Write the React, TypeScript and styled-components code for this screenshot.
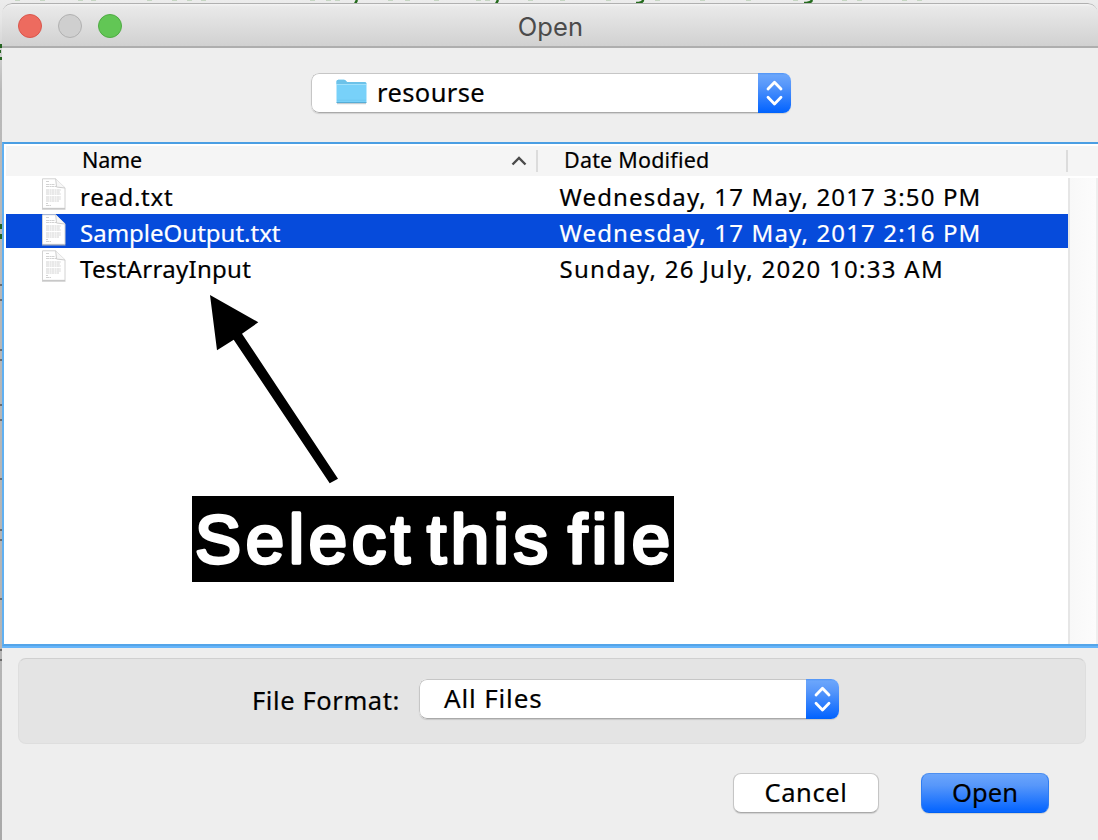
import React from 'react';
import styled, { createGlobalStyle, css } from 'styled-components';

const GlobalStyle = createGlobalStyle`
  *, *::before, *::after { box-sizing: border-box; }
  body { margin: 0; overflow: hidden; }
`;

const uiFont = "'Noto Sans', 'Open Sans', sans-serif";

const Desktop = styled.div`
  position: relative;
  width: 1098px;
  height: 840px;
  padding: 3px 0 0 2px;
  overflow: hidden;
  background: linear-gradient(#ececec 0, #e6e6e6 20px, #b9b9b9 90px, #b4b4b4 700px, #a8a8a8);
  font-family: ${uiFont};
  color: #000;
`;

const EditorSliver = styled.svg`
  position: absolute;
  left: 0;
  top: 0;
`;

const Window = styled.main`
  position: relative;
  display: flex;
  flex-direction: column;
  width: 1096px;
  height: 837px;
  border-radius: 10px 10px 0 0;
  background: #eee;
  overflow: hidden;
`;

const TitleBar = styled.header`
  display: grid;
  grid-template-columns: 1fr auto 1fr;
  align-items: center;
  height: 45px;
  padding: 1px 15px 0 16px;
  border-top: 1px solid #b0b0b0;
  border-bottom: 2px solid #aeaeae;
  border-radius: 10px 10px 0 0;
  background: linear-gradient(#f4f4f4 0, #e9e9e9 3px, #d1d1d1 100%);
`;

const TrafficLights = styled.div`
  display: flex;
  gap: 16px;
`;

const Light = styled.span<{ $fill: string; $ring: string }>`
  width: 24px;
  height: 24px;
  border: 1px solid ${p => p.$ring};
  border-radius: 50%;
  background: ${p => p.$fill};
`;

const Title = styled.h1`
  margin: 0;
  padding-top: 3px;
  font: 400 25.5px/30px Inter, sans-serif;
  letter-spacing: 0.1px;
  color: #4b4b4b;
`;

const Toolbar = styled.div`
  display: flex;
  justify-content: center;
  height: 94px;
  padding: 25px 0 0 2px;
`;

const Select = styled.div<{ $width: number }>`
  display: flex;
  width: ${p => p.$width}px;
  height: 40px;
  border-radius: 8px;
  background: #fff;
  overflow: hidden;
  box-shadow: 0 1px 1px rgba(0, 0, 0, 0.13);
`;

const SelectValue = styled.div<{ $indent: number }>`
  display: flex;
  flex: 1;
  align-items: center;
  padding-left: ${p => p.$indent}px;
  padding-bottom: 2px;
  border: 1px solid #c6c6c6;
  border-right: 0;
  border-bottom-color: #a9a9a9;
  border-radius: 8px 0 0 8px;
`;

const SelectToggle = styled.div`
  display: flex;
  align-items: center;
  justify-content: center;
  width: 33px;
  background: linear-gradient(#4f93f6 0, #6ba6fb 2px, #5797fa 30%, #0a68ff 92%, #0063fb);
`;

const Label = styled.span<{ $size: number; $spacing: number }>`
  font-size: ${p => p.$size}px;
  line-height: 34px;
  letter-spacing: ${p => p.$spacing}px;
  white-space: nowrap;
  -webkit-text-stroke: 0.2px currentColor;
`;

const FileList = styled.section`
  position: relative;
  height: 504px;
  padding: 2px 0 0 2px;
  border-top: 2px solid #4a9ee3;
  border-left: 2px solid #60b0f2;
  border-bottom: 2px solid #54a5e9;
  background: #fff;
  box-shadow: 0 2px #66b5fa;
`;

const columns = css`
  display: grid;
  grid-template-columns: 532px 530px 30px;
`;

const ListHeader = styled.div`
  ${columns}
  height: 30px;
  padding: 4px 0;
  background: #f5f5f5;
`;

const HeaderCell = styled.div<{ $indent: number }>`
  display: flex;
  align-items: center;
  justify-content: space-between;
  height: 22px;
  padding-left: ${p => p.$indent}px;
  padding-right: 9px;
  padding-bottom: 3px;
  border-right: 2px solid #dcdcdc;
`;

const ListBody = styled.div`
  display: grid;
  grid-template-columns: 1062px 30px;
  height: 468px;
  padding-top: 2px;
`;

const Rows = styled.div`
  display: flex;
  flex-direction: column;
  gap: 2px;
`;

const Row = styled.div<{ $selected?: boolean }>`
  display: grid;
  grid-template-columns: 35px 39px 479.5px 1fr;
  height: 34px;
  color: ${p => (p.$selected ? '#fff' : '#000')};
  background: ${p => (p.$selected ? '#064bdb' : '#fff')};
`;

const NameLabel = styled(Label)`
  grid-column: 3;
  padding-top: 2px;
`;

const DateLabel = styled(Label)`
  padding-top: 2px;
`;

const FileIcon = styled.svg`
  grid-column: 2;
`;

const FolderIcon = styled.svg`
  margin-right: 10px;
`;

const SortArrow = styled.svg`
  margin-top: 2px;
`;

const ScrollTrack = styled.div`
  border-left: 2px solid #e6e6e6;
  border-right: 2px solid #efefef;
  background: linear-gradient(90deg, #f8f8f8, #fcfcfc);
`;

const FormatPanel = styled.section`
  display: flex;
  align-items: center;
  width: 1068px;
  height: 86px;
  margin: 12px 0 0 16px;
  padding: 0 0 4px 233px;
  border: 1px solid #dedede;
  border-top-color: #d0d0d0;
  border-radius: 8px;
  background: #e4e4e4;
`;

const FormatCaption = styled(Label)`
  width: 167px;
  padding-top: 2px;
`;

const Actions = styled.footer`
  display: flex;
  justify-content: flex-end;
  gap: 42px;
  padding: 29px 49px 0 0;
`;

const Button = styled.button<{ $primary?: boolean }>`
  display: flex;
  align-items: center;
  justify-content: center;
  width: ${p => (p.$primary ? 128 : 146)}px;
  height: 40px;
  padding: 0 0 2px;
  border: 1px solid;
  border-color: ${p => (p.$primary ? '#4d8ff0 #2f7df2 #0060f3' : '#cbcbcb #c5c5c5 #a9a9a9')};
  border-radius: 8px;
  font-family: ${uiFont};
  color: #000;
  background: ${p => (p.$primary ? 'linear-gradient(#6ba5fb, #5797fa 30%, #0a68ff 94%)' : '#fff')};
  box-shadow: 0 1px 1px rgba(0, 0, 0, 0.13);
`;

const Annotation = styled.svg`
  position: absolute;
  left: 188px;
  top: 150px;
`;

function Chevrons() {
  return (
    <svg width="17" height="26" viewBox="0 0 17 26" fill="none" stroke="#fff" strokeWidth="2.8" strokeLinecap="round" strokeLinejoin="round">
      <path d="M2 9 8.5 2.3 15 9M2 17.3 8.5 24 15 17.3" />
    </svg>
  );
}

function Folder() {
  return (
    <FolderIcon width="31" height="26" viewBox="0 0 31 26">
      <path d="M1 24.7h29" stroke="#b9c3c8" strokeWidth="1" />
      <path d="M.5 2.5Q.5.7 2.3.7H8q1 0 1.6.8L11 3h17.5q2 0 2 2v17.6q0 1.4-1.5 1.4H2Q.5 24 .5 22.5Z" fill="#78d1f9" />
      <path d="M.5 5V2.5Q.5.7 2.3.7H8q1 0 1.6.8L11 3h17.5q2 0 2 2Z" fill="#6cc2e9" />
      <path d="M1 5.5h29" stroke="#a0e0fb" />
      <path d="M1 21.2h29" stroke="#69c3ed" strokeWidth=".7" />
      <path d="M.5 23.5h30" stroke="#55acd6" />
    </FolderIcon>
  );
}

function Document() {
  return (
    <FileIcon width="26" height="34" viewBox="0 0 26 34">
      <path d="M1.5.8h13.2l9.3 9V30.3H1.5Z" fill="#fff" stroke="#d2d2d2" />
      <path d="M1 31h23.5" stroke="#b4b4b4" />
      <path d="M14.7.8 15.5 9 24 10" fill="#f7f7f7" stroke="#cdcdcd" />
      <path d="M5 3.5h3M5 6.5h9M5 8.5h10M5 12h15M5 14h14M5 16h15M5 19h15M5 21h15M5 23h13M5 25.5h2M5 27.5h5" stroke="#c6c6c6" strokeWidth=".8" strokeDasharray="3 .5 1.5 .4" />
    </FileIcon>
  );
}

const files = [
  { name: 'read.txt', spacing: 0.7, date: 'Wednesday, 17 May, 2017 3:50 PM', dateSpacing: 1.15 },
  { name: 'SampleOutput.txt', spacing: 0, date: 'Wednesday, 17 May, 2017 2:16 PM', dateSpacing: 1.15, selected: true },
  { name: 'TestArrayInput', spacing: 0.3, date: 'Sunday, 26 July, 2020 10:33 AM', dateSpacing: 1.28 },
];

const words = [
  { text: 'Select', x: 3, length: 215 },
  { text: 'this', x: 235, length: 121 },
  { text: 'file', x: 376, length: 102 },
];

const topMarks = [15, 40, 78, 91, 147, 172, 187, 201, 310, 326, 335, 388, 405, 434, 476, 485, 528, 560, 606, 655, 700, 746, 793, 842, 857, 902, 917];

export default function App() {
  return (
    <>
      <GlobalStyle />
      <Desktop>
        <EditorSliver width="1098" height="840">
          <path d={topMarks.map(x => `M${x} 0h5`).join('')} stroke="#b9ceb5" strokeWidth="1.5" />
          <path d="M357 0l-2 4M498 0l-2 4M643 0q0 3-7 3M812 0q-1 3-8 3" fill="none" stroke="#246b1d" strokeWidth="2.5" />
          <path d="M0 44h2v4H0zM0 50h1v3H0zM0 57h2v3H0zM0 224h2v5H0zM0 234h2v5H0z" fill="#256421" />
          <path d="M0 284h2v2H0zM0 299h2v2H0zM0 349h2v2H0zM0 359h2v2H0zM0 404h2v2H0zM0 419h2v2H0zM0 478h2v2H0zM0 529h2v2H0zM0 539h2v2H0zM0 598h2v2H0zM0 649h2v2H0zM0 659h2v2H0z" fill="#6c6c6c" />
        </EditorSliver>
        <Window>
          <TitleBar>
            <TrafficLights>
              <Light $fill="#ed6b5f" $ring="#d9564c" />
              <Light $fill="#cfcfcf" $ring="#b1b1b1" />
              <Light $fill="#62c655" $ring="#4fab43" />
            </TrafficLights>
            <Title>Open</Title>
          </TitleBar>
          <Toolbar>
            <Select $width={480}>
              <SelectValue $indent={24}>
                <Folder />
                <Label $size={25.5} $spacing={0.4}>resourse</Label>
              </SelectValue>
              <SelectToggle><Chevrons /></SelectToggle>
            </Select>
          </Toolbar>
          <FileList>
            <ListHeader>
              <HeaderCell $indent={76}>
                <Label $size={21.5} $spacing={-0.2}>Name</Label>
                <SortArrow width="16" height="10" viewBox="0 0 16 10" fill="none" stroke="#4a4a4a" strokeWidth="2.4">
                  <path d="M1.5 8.5 8 2l6.5 6.5" />
                </SortArrow>
              </HeaderCell>
              <HeaderCell $indent={26}>
                <Label $size={21.5} $spacing={0.2}>Date Modified</Label>
              </HeaderCell>
            </ListHeader>
            <ListBody>
              <Rows>
                {files.map(f => (
                  <Row key={f.name} $selected={f.selected}>
                    <Document />
                    <NameLabel $size={24} $spacing={f.spacing}>{f.name}</NameLabel>
                    <DateLabel $size={24} $spacing={f.dateSpacing}>{f.date}</DateLabel>
                  </Row>
                ))}
              </Rows>
              <ScrollTrack />
            </ListBody>
            <Annotation width="482" height="290">
              <path d="M18 1 66.3 28.3 50 39.7 146 184.7 137.7 189.3 41.7 45.7 25 56.3Z" />
              <rect y="202" width="482" height="86" />
              {words.map(w => (
                <text key={w.text} x={w.x} y="268.5" textLength={w.length} fontFamily="'Liberation Sans', Arial, sans-serif" fontSize="69" fill="#fff" stroke="#fff" strokeWidth="3.4" strokeLinejoin="round">{w.text}</text>
              ))}
            </Annotation>
          </FileList>
          <FormatPanel>
            <FormatCaption $size={25.5} $spacing={0.6}>File Format:</FormatCaption>
            <Select $width={420}>
              <SelectValue $indent={24}>
                <Label $size={26} $spacing={0.85}>All Files</Label>
              </SelectValue>
              <SelectToggle><Chevrons /></SelectToggle>
            </Select>
          </FormatPanel>
          <Actions>
            <Button><Label $size={25.5} $spacing={0.6}>Cancel</Label></Button>
            <Button $primary><Label $size={25.5} $spacing={0.1}>Open</Label></Button>
          </Actions>
        </Window>
      </Desktop>
    </>
  );
}
